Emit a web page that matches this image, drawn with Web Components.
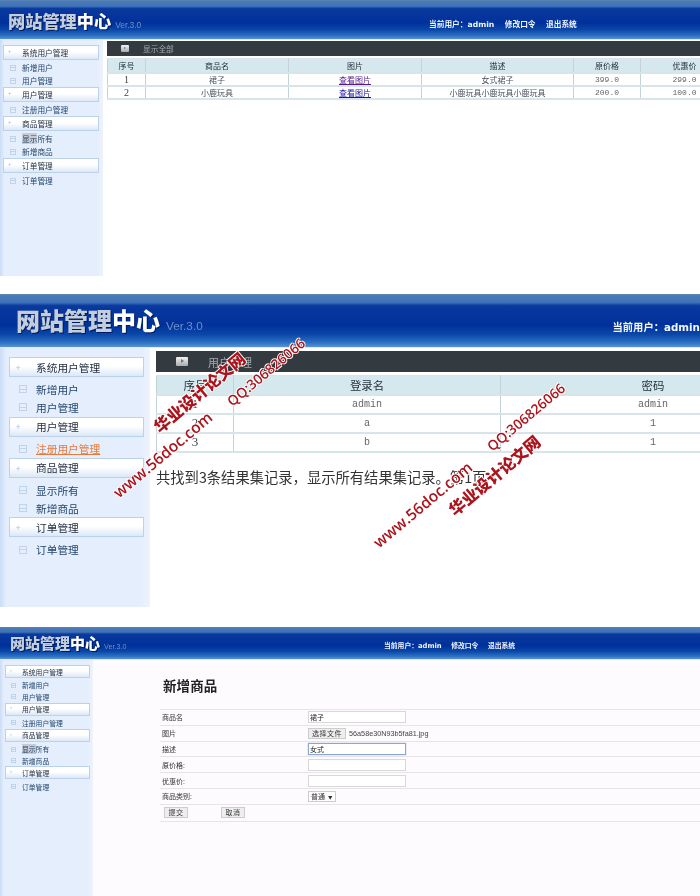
<!DOCTYPE html>
<html lang="zh-CN">
<head>
<meta charset="utf-8">
<title>网站管理中心</title>
<style>
  html, body { margin: 0; background: #fff; }
  body {
    width: 700px;
    height: 896px;
    overflow: hidden;
    font-family: "Liberation Sans", "Noto Sans CJK SC", sans-serif;
  }
  #shot1 {
    --panel-h: 276px; --gap-after: 18px;
    --head-h: 40px; --logo: 17.2px; --logo-x: 8px; --logo-y: 12px; --ver: 8.4px; --ver-gap: 4px;
    --nav-x: 429px; --nav-font: 7.7px; --nav-gap: 10.5px; --nav-y: 20px;
    --menu-w: 103px; --menu-x: 3px; --menu-r: 4px; --menu-top: 5px; --menu-font: 7.7px;
    --group-h: 14.5px; --item-h: 13px; --item-pad: 1.5px; --item-x: 22px; --icon: 6px; --icon-x: 10px; --group-text-x: 18px;
    --content-x: 4px;
  }
  #shot2 {
    --panel-h: 313px; --gap-after: 20px;
    --head-h: 54px; --logo: 24px; --logo-x: 16px; --logo-y: 14px; --ver: 11.8px; --ver-gap: 6px;
    --nav-x: 612.5px; --nav-font: 10.3px; --nav-gap: 14px; --nav-y: 27px;
    --menu-w: 150px; --menu-x: 9px; --menu-r: 6px; --menu-top: 9px; --menu-font: 10.7px;
    --group-h: 20px; --item-h: 18.3px; --item-pad: 3px; --item-x: 36px; --icon: 8px; --icon-x: 19px; --group-text-x: 26px;
    --content-x: 6px;
  }
  #shot3 {
    --panel-h: 269px; --gap-after: 0px;
    --head-h: 33px; --logo: 15px; --logo-x: 10px; --logo-y: 8px; --ver: 7.2px; --ver-gap: 4px;
    --nav-x: 384px; --nav-font: 6.8px; --nav-gap: 9.5px; --nav-y: 15px;
    --menu-w: 93px; --menu-x: 5px; --menu-r: 3px; --menu-top: 5px; --menu-font: 6.8px;
    --group-h: 13px; --item-h: 11.6px; --item-pad: 1.5px; --item-x: 22px; --icon: 5px; --icon-x: 11px; --group-text-x: 16px;
    --content-x: 0px;
  }
</style>
</head>
<body>

<admin-panel id="shot1">
  <site-header slot="head"></site-header>
  <side-menu slot="menu" selected="显示所有"></side-menu>
  <action-bar style="--bar-h:15px;--bar-top:1px;--bar-font:7.7px;--bar-icon:8px;--bar-icon-x:14px;--bar-text-x:14px">显示全部</action-bar>
  <data-table
    style="--th-h:14px;--td-h:13px;--th-font:8px;--td-font:8px;--top:2px;--width:621px"
    columns='[["序号",38],["商品名",143],["图片",133],["描述",152],["原价格",67],["优惠价",88]]'
    rows='[[["1","num"],"裙子",["查看图片","visited"],"女式裙子",["399.0","mono"],["299.0","mono"]],[["2","num"],"小鹿玩具",["查看图片","link"],"小鹿玩具小鹿玩具小鹿玩具",["200.0","mono"],["100.0","mono"]]]'></data-table>
</admin-panel>

<admin-panel id="shot2">
  <site-header slot="head" compact></site-header>
  <side-menu slot="menu" active="注册用户管理"></side-menu>
  <action-bar style="--bar-h:21px;--bar-top:3px;--bar-font:11px;--bar-icon:12px;--bar-icon-x:20px;--bar-text-x:20px">用户管理</action-bar>
  <data-table
    style="--th-h:19px;--td-h:19px;--th-font:11.4px;--td-font:10px;--top:3px;--width:649px;--num-font:13px"
    columns='[["序号",77],["登录名",267],["密码",305]]'
    rows='[[["1","num"],["admin","mono"],["admin","mono"]],[["2","num"],["a","mono"],["1","mono"]],[["3","num"],["b","mono"],["1","mono"]]]'></data-table>
  <result-line>共找到3条结果集记录，显示所有结果集记录。第1页</result-line>
  <water-mark x="199" y="98" size="16.2">华业设计论文网</water-mark>
  <water-mark x="266" y="78" size="13.8" thin>QQ:306826066</water-mark>
  <water-mark x="163" y="161" size="15.6" thin>www.56doc.com</water-mark>
  <water-mark x="423" y="211" size="15.6" thin>www.56doc.com</water-mark>
  <water-mark x="526" y="123" size="13.8" thin>QQ:306826066</water-mark>
  <water-mark x="494" y="181" size="16.2">华业设计论文网</water-mark>
</admin-panel>

<admin-panel id="shot3" style="--content-bg:#fdfbfd">
  <site-header slot="head"></site-header>
  <side-menu slot="menu" selected="显示所有"></side-menu>
  <goods-form></goods-form>
</admin-panel>

<script>
const panelTemplate = document.createElement('template');
panelTemplate.innerHTML = `
  <style>
    :host {
      display: grid;
      grid-template-columns: var(--menu-w) 1fr;
      grid-template-rows: var(--head-h) 1fr;
      height: var(--panel-h);
      margin-bottom: var(--gap-after);
      position: relative;
      overflow: hidden;
      background: var(--content-bg, #fff);
      filter: blur(0.45px);
    }
    ::slotted(site-header) { grid-column: 1 / 3; }
    .content {
      padding-left: var(--content-x);
      min-width: 0;
      overflow: hidden;
    }
  </style>
  <slot name="head"></slot>
  <slot name="menu"></slot>
  <div class="content"><slot></slot></div>
`;

class AdminPanel extends HTMLElement {
  constructor() {
    super();
    this.attachShadow({ mode: 'open' });
    this.shadowRoot.appendChild(panelTemplate.content.cloneNode(true));
  }
}

const headerTemplate = document.createElement('template');
headerTemplate.innerHTML = `
  <style>
    :host {
      display: block;
      height: var(--head-h);
      box-sizing: border-box;
      position: relative;
      border-bottom: 1px solid #dfeaf8;
      background: linear-gradient(#5d86b4 0, #4a7ab6 4%, #3f72b8 16%, #0a3a9e 22%, #00309a 58%, #0a46a8 76%, #2d72c4 92%, #5a94d6 100%);
    }
    .logo {
      position: absolute;
      left: var(--logo-x);
      top: var(--logo-y);
      display: flex;
      align-items: baseline;
      gap: var(--ver-gap);
      white-space: nowrap;
      line-height: 1;
    }
    .name {
      font: 900 var(--logo) "Noto Sans CJK SC", sans-serif;
      line-height: 1;
      color: #fff;
      filter: drop-shadow(1px 1px 0 #001a5c);
    }
    .name b { font-weight: 900; color: #c3cedd; }
    .ver {
      font-family: "Liberation Sans", sans-serif;
      font-size: var(--ver);
      color: #6d90c4;
    }
    nav {
      position: absolute;
      left: var(--nav-x);
      top: var(--nav-y);
      display: flex;
      gap: var(--nav-gap);
      white-space: nowrap;
      font: bold var(--nav-font) "DejaVu Sans", "Noto Sans CJK SC", sans-serif;
      line-height: 1.2;
      color: #f2f6fc;
    }
    /* the second shot is cropped right after the user name */
    :host([compact]) nav span:not(:first-child) { display: none; }
  </style>
  <div class="logo">
    <span class="name"><b>网站管理</b>中心</span>
    <span class="ver">Ver.3.0</span>
  </div>
  <nav>
    <span>当前用户：admin</span>
    <span>修改口令</span>
    <span>退出系统</span>
  </nav>
`;

class SiteHeader extends HTMLElement {
  constructor() {
    super();
    this.attachShadow({ mode: 'open' });
    this.shadowRoot.appendChild(headerTemplate.content.cloneNode(true));
  }
}

const MENU = [
  { name: '系统用户管理', items: ['新增用户', '用户管理'] },
  { name: '用户管理', items: ['注册用户管理'] },
  { name: '商品管理', items: ['显示所有', '新增商品'] },
  { name: '订单管理', items: ['订单管理'] }
];

const menuTemplate = document.createElement('template');
menuTemplate.innerHTML = `
  <style>
    :host {
      display: block;
      min-height: 100%;
      box-sizing: border-box;
      padding-top: var(--menu-top);
      background: linear-gradient(90deg, #cadcf6 0, #e4eefc 4%, #e4eefc 94%, #eef3fd 100%);
      font: var(--menu-font) "Noto Sans CJK SC", sans-serif;
      color: #2a3a55;
    }
    .group {
      display: flex;
      align-items: center;
      height: var(--group-h);
      box-sizing: border-box;
      margin: 0 var(--menu-r) 0 var(--menu-x);
      border: 1px solid #bcd2ea;
      background: linear-gradient(#fff 0, #fff 45%, #dce8f6 100%);
      color: #1e2a3c;
    }
    .plus {
      width: var(--group-text-x);
      box-sizing: border-box;
      padding-left: calc(var(--group-text-x) * 0.22);
      flex: none;
      color: #a9c3e0;
      font-size: 0.8em;
      line-height: 1;
    }
    ul {
      list-style: none;
      margin: 0;
      padding: var(--item-pad) 0 0;
    }
    li {
      display: flex;
      align-items: center;
      height: var(--item-h);
      padding-left: var(--icon-x);
      color: #24466e;
    }
    .box {
      width: var(--icon);
      height: var(--icon);
      flex: none;
      box-sizing: border-box;
      border: 1px solid #c0d3e8;
      background: linear-gradient(#c0d3e8, #c0d3e8) center / 100% 1px no-repeat;
      margin-right: calc(var(--item-x) - var(--icon-x) - var(--icon));
    }
    .active { color: #e8793a; text-decoration: underline; }
    mark { background: #c8cbd2; color: inherit; }
  </style>
  <div class="list"></div>
`;

class SideMenu extends HTMLElement {
  constructor() {
    super();
    this.attachShadow({ mode: 'open' });
    this.shadowRoot.appendChild(menuTemplate.content.cloneNode(true));
  }

  connectedCallback() {
    this.render();
  }

  renderItem(item) {
    const active = this.getAttribute('active');
    const selected = this.getAttribute('selected');
    let text = `<span>${item}</span>`;
    if (item === active) text = `<span class="active">${item}</span>`;
    if (item === selected) text = `<span><mark>${item.slice(0, 2)}</mark>${item.slice(2)}</span>`;
    return `<li><i class="box"></i>${text}</li>`;
  }

  render() {
    this.shadowRoot.querySelector('.list').innerHTML = MENU.map(group => `
      <div class="group"><span class="plus">+</span>${group.name}</div>
      <ul>${group.items.map(item => this.renderItem(item)).join('')}</ul>
    `).join('');
  }
}

const barTemplate = document.createElement('template');
barTemplate.innerHTML = `
  <style>
    :host {
      display: flex;
      align-items: center;
      height: var(--bar-h);
      margin-top: var(--bar-top);
      background: #333b41;
      color: #a3aaae;
      font: var(--bar-font) "Noto Sans CJK SC", sans-serif;
    }
    .icon {
      width: var(--bar-icon);
      height: calc(var(--bar-icon) * 0.8);
      margin: 0 var(--bar-text-x) 0 var(--bar-icon-x);
      background: linear-gradient(#f2f2f2, #a8acb0);
      border-radius: 1px;
      position: relative;
    }
    .icon::after {
      content: "";
      position: absolute;
      left: 40%;
      top: 25%;
      border-left: calc(var(--bar-icon) * 0.25) solid #6d7378;
      border-top: calc(var(--bar-icon) * 0.2) solid transparent;
      border-bottom: calc(var(--bar-icon) * 0.2) solid transparent;
    }
  </style>
  <i class="icon"></i><slot></slot>
`;

class ActionBar extends HTMLElement {
  constructor() {
    super();
    this.attachShadow({ mode: 'open' });
    this.shadowRoot.appendChild(barTemplate.content.cloneNode(true));
  }
}

const tableTemplate = document.createElement('template');
tableTemplate.innerHTML = `
  <style>
    :host {
      display: block;
      margin-top: var(--top);
    }
    table {
      width: var(--width);
      table-layout: fixed;
      border-collapse: collapse;
      font: var(--td-font) "Noto Sans CJK SC", sans-serif;
      color: #4a525c;
    }
    th, td {
      padding: 0;
      box-sizing: border-box;
      border: 1px solid #c3d3da;
      border-top-color: #d7e4e8;
      border-bottom: 2px solid #d7e4e8;
      text-align: center;
      white-space: nowrap;
      overflow: hidden;
    }
    th {
      height: var(--th-h);
      background: #d5e8ee;
      font-size: var(--th-font);
      font-weight: normal;
      color: #25303a;
    }
    td { height: var(--td-h); }
    .num { font: var(--num-font, 10px) "Liberation Serif", serif; color: #444; }
    .mono { font-family: "Liberation Mono", monospace; color: #666; }
    a { color: #1a0dab; text-decoration: underline; }
    a.visited { color: #551a8b; }
  </style>
  <table><colgroup></colgroup><thead><tr></tr></thead><tbody></tbody></table>
`;

class DataTable extends HTMLElement {
  constructor() {
    super();
    this.attachShadow({ mode: 'open' });
    this.shadowRoot.appendChild(tableTemplate.content.cloneNode(true));
  }

  static get observedAttributes() {
    return ['columns', 'rows'];
  }

  readJson(name) {
    try {
      return JSON.parse(this.getAttribute(name) || '[]');
    } catch {
      return [];
    }
  }

  connectedCallback() {
    this.render();
  }

  attributeChangedCallback(name, oldValue, newValue) {
    if (oldValue !== newValue && this.isConnected) {
      this.render();
    }
  }

  renderCell(cell) {
    if (!Array.isArray(cell)) return `<td>${cell}</td>`;
    const [text, kind] = cell;
    if (kind === 'link' || kind === 'visited') {
      return `<td><a class="${kind}" href="#">${text}</a></td>`;
    }
    return `<td class="${kind}">${text}</td>`;
  }

  render() {
    const root = this.shadowRoot;
    const columns = this.readJson('columns');
    root.querySelector('colgroup').innerHTML = columns.map(c => `<col style="width:${c[1]}px">`).join('');
    root.querySelector('thead tr').innerHTML = columns.map(c => `<th>${c[0]}</th>`).join('');
    root.querySelector('tbody').innerHTML = this.readJson('rows').map(row =>
      `<tr>${row.map(cell => this.renderCell(cell)).join('')}</tr>`
    ).join('');
  }
}

class ResultLine extends HTMLElement {
  constructor() {
    super();
    this.attachShadow({ mode: 'open' }).innerHTML = `
      <style>
        :host {
          display: block;
          margin-top: 13px;
          white-space: nowrap;
          font: 14.3px/22px "Noto Sans CJK SC", sans-serif;
          color: #333;
        }
      </style>
      <slot></slot>
    `;
  }
}

class WaterMark extends HTMLElement {
  constructor() {
    super();
    this.attachShadow({ mode: 'open' }).innerHTML = `
      <style>
        :host {
          position: absolute;
          white-space: nowrap;
          transform: translate(-50%, -50%) rotate(-40deg);
          font: 900 17px/1 "Noto Sans CJK SC", sans-serif;
          color: #ab141c;
          text-shadow: 1px 0 0 #fff, -1px 0 0 #fff, 0 1px 0 #fff, 0 -1px 0 #fff;
        }
        :host([thin]) {
          font-family: "Open Sans", "Noto Sans", sans-serif;
          font-weight: 600;
        }
      </style>
      <slot></slot>
    `;
  }

  connectedCallback() {
    // a watermark lies over the page, its place is given by its centre
    this.style.left = this.getAttribute('x') + 'px';
    this.style.top = this.getAttribute('y') + 'px';
    this.style.fontSize = this.getAttribute('size') + 'px';
  }
}

const formTemplate = document.createElement('template');
formTemplate.innerHTML = `
  <style>
    :host {
      display: block;
      padding: 15px 0 0 67px;
      font: 7px "Noto Sans CJK SC", sans-serif;
      color: #333;
    }
    h1 {
      margin: 0 0 14px 3px;
      height: 20px;
      font: bold 13.5px/20px "Noto Sans CJK SC", serif;
      letter-spacing: 0.1px;
      color: #222;
    }
    .row {
      display: grid;
      grid-template-columns: 146px 1fr;
      align-items: center;
      height: 15.8px;
      box-sizing: border-box;
      border-top: 1.5px solid #e6e4e6;
      padding-left: 2px;
    }
    .row:last-child { border-bottom: 1.5px solid #e6e4e6; height: 18px; }
    .field { display: flex; align-items: center; gap: 3px; }
    input {
      width: 98px;
      height: 12px;
      box-sizing: border-box;
      margin: 0;
      padding: 0 1px;
      border: 1px solid #d8d8d8;
      background: #fff;
      font: 7px "Noto Sans CJK SC", sans-serif;
      color: #222;
      outline: none;
    }
    input.focus { border-color: #8aa8d4; box-shadow: 0 0 1px #8aa8d4; }
    button, .select {
      box-sizing: border-box;
      height: 11px;
      margin: 0;
      padding: 0;
      border: 1px solid #ccc;
      background: #eee;
      font: 7px/9px "Noto Sans CJK SC", sans-serif;
      letter-spacing: 0.5px;
      color: #333;
    }
    .file { width: 38px; }
    .filename { font: 7.25px "Liberation Sans", sans-serif; color: #444; }
    .select { width: 28px; background: #fff; padding-left: 2px; letter-spacing: 0; }
    .select i { font-style: normal; font-size: 4.5px; margin-left: 2px; }
    .buttons { display: flex; gap: 33px; padding-left: 2px; white-space: nowrap; }
    .buttons button { width: 24px; }
  </style>
  <h1>新增商品</h1>
  <div class="row"><span>商品名</span><span class="field"><input value="裙子"></span></div>
  <div class="row"><span>图片</span><span class="field"><button class="file">选择文件</button><span class="filename">56a58e30N93b5fa81.jpg</span></span></div>
  <div class="row"><span>描述</span><span class="field"><input class="focus" value="女式"></span></div>
  <div class="row"><span>原价格:</span><span class="field"><input></span></div>
  <div class="row"><span>优惠价:</span><span class="field"><input></span></div>
  <div class="row"><span>商品类别:</span><span class="field"><span class="select">普通<i> ▼</i></span></span></div>
  <div class="row"><span class="buttons"><button>提交</button><button>取消</button></span></div>
`;

class GoodsForm extends HTMLElement {
  constructor() {
    super();
    this.attachShadow({ mode: 'open' });
    this.shadowRoot.appendChild(formTemplate.content.cloneNode(true));
  }
}

customElements.define('admin-panel', AdminPanel);
customElements.define('site-header', SiteHeader);
customElements.define('side-menu', SideMenu);
customElements.define('action-bar', ActionBar);
customElements.define('data-table', DataTable);
customElements.define('result-line', ResultLine);
customElements.define('water-mark', WaterMark);
customElements.define('goods-form', GoodsForm);
</script>
</body>
</html>
